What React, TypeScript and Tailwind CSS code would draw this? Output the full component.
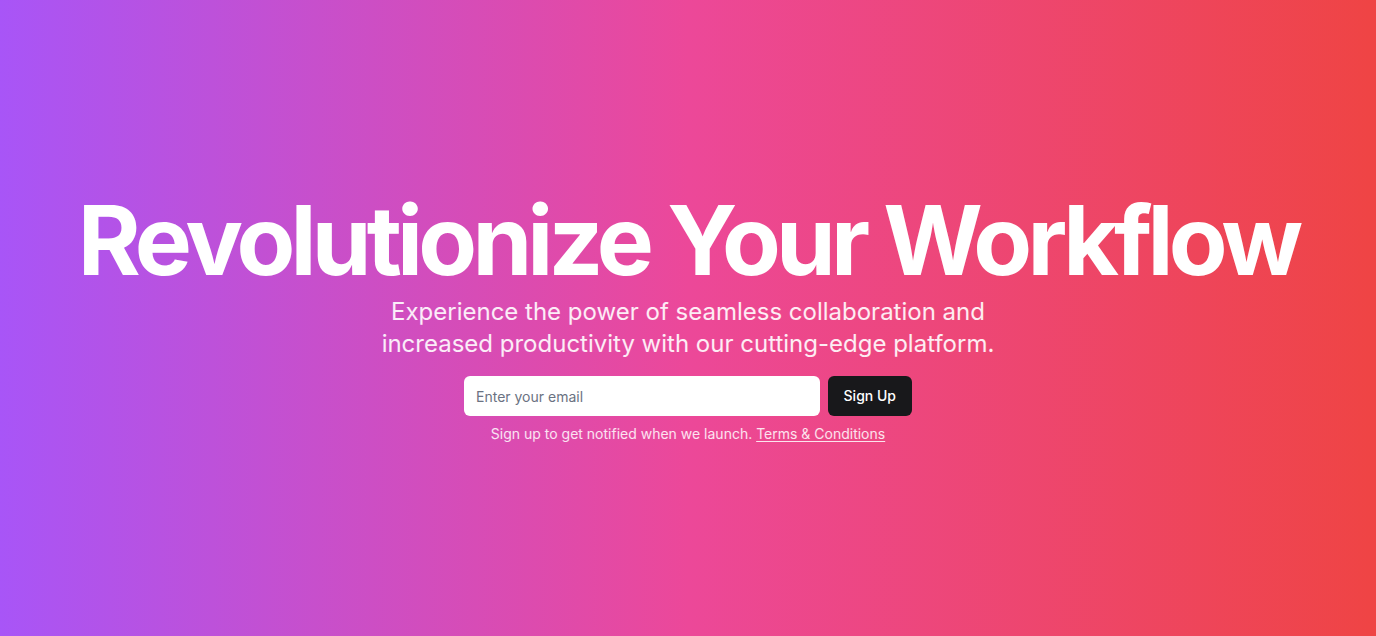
export default function App() {
  return (
    <section
      className="min-h-screen w-full flex flex-col items-center justify-center bg-[linear-gradient(to_right,#a855f7,#ec4899,#ef4444)] px-4 text-center"
      style={{ fontFamily: "Inter, 'Noto Sans', sans-serif" }}
    >
      <div className="flex flex-col items-center gap-2">
        <h1 className="text-8xl leading-none font-bold tracking-tighter text-white">
          Revolutionize Your Workflow
        </h1>
        <p className="max-w-2xl text-2xl text-white/90">
          Experience the power of seamless collaboration and increased productivity with our cutting-edge platform.
        </p>
      </div>
      <div className="mt-4 w-full max-w-md flex flex-col gap-2">
        <form className="flex gap-2" onSubmit={(e) => e.preventDefault()}>
          <input
            type="email"
            placeholder="Enter your email"
            className="h-10 flex-1 rounded-md bg-white px-3 text-sm text-gray-900 placeholder:text-gray-500 outline-none"
          />
          <button
            type="submit"
            className="h-10 rounded-md bg-[#18181b] px-4 text-sm font-medium text-white"
          >
            Sign Up
          </button>
        </form>
        <p className="text-sm text-white/85">
          Sign up to get notified when we launch.{" "}
          <a href="#" className="underline underline-offset-2">
            Terms &amp; Conditions
          </a>
        </p>
      </div>
    </section>
  );
}
